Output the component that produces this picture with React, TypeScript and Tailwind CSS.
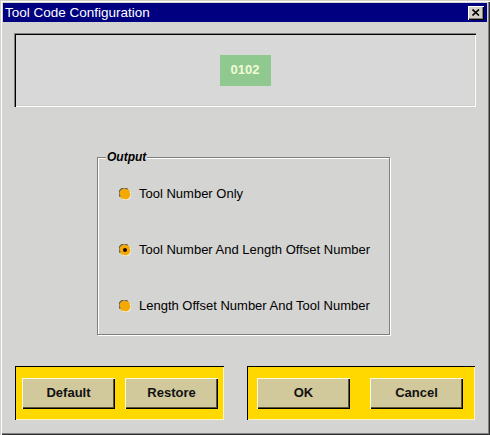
import React, { useState } from "react";

const OPTIONS = [
  "Tool Number Only",
  "Tool Number And Length Offset Number",
  "Length Offset Number And Tool Number",
];

const Radio = ({ checked }: { checked: boolean }) => (
  <svg width="12" height="12" viewBox="0 0 12 12" className="shrink-0">
    <circle cx="6" cy="6" r="5.5" fill="#f5a800" />
    <path d="M1.2 8.5 A5.2 5.2 0 0 1 8.5 1.2" fill="none" stroke="#6b5a3a" strokeWidth="1.3" />
    <path d="M3.5 10.8 A5.2 5.2 0 0 0 10.8 3.5" fill="none" stroke="#fff6d8" strokeWidth="1" />
    {checked && <circle cx="6" cy="6" r="2" fill="#1a0a00" />}
  </svg>
);

const Button = ({ label }: { label: string }) => (
  <button className="w-[93px] h-[31px] bg-[#d1c89c] text-[13px] font-bold text-[#111] shadow-[inset_1px_1px_#fffbe0,inset_-1px_-1px_#000,inset_-2px_-2px_#5a5438]">
    {label}
  </button>
);

export default function App() {
  const [selected, setSelected] = useState(1);

  return (
    <div
      className="w-[490px] h-[435px] bg-[#d4d4d2] p-[3px] flex flex-col shadow-[inset_1px_1px_#d4d0c8,inset_2px_2px_#ffffff,inset_-1px_-1px_#303030,inset_-2px_-2px_#808080]"
      style={{ fontFamily: '"Liberation Sans", Arial, sans-serif' }}
    >
      {/* title bar */}
      <div className="h-[19px] bg-[#000080] flex items-center justify-between pl-[2px] pr-[3px]">
        <span className="text-white text-[13.5px] leading-none">Tool Code Configuration</span>
        <div className="w-[16px] h-[14px] bg-[#d4d0c8] flex items-center justify-center shadow-[inset_1px_1px_#ffffff,inset_-1px_-1px_#000,inset_-2px_-2px_#808080]">
          <svg width="8" height="7" viewBox="0 0 8 7">
            <path d="M0.5 0.5 L7 6.5 M7 0.5 L0.5 6.5" stroke="#000" strokeWidth="1.6" />
          </svg>
        </div>
      </div>

      <div className="flex flex-col px-[11px]">
        {/* code display */}
        <div className="mt-[11px] h-[74px] bg-[#d8d8d8] flex items-center justify-center shadow-[inset_1px_1px_#808080,inset_2px_2px_#000,inset_-1px_-1px_#ffffff,inset_-2px_-2px_#d4d0c8]">
          <div className="w-[51px] h-[31px] bg-[#8fc98f] flex items-center justify-center text-[13px] font-bold text-[#f4fbd6]">
            0102
          </div>
        </div>

        {/* output group */}
        <div className="relative ml-[83px] mt-[50px] w-[293px] h-[178px] border border-[#808080] shadow-[1px_1px_#ffffff,inset_1px_1px_#ffffff] pt-[8px]">
          <span className="absolute -top-[8px] left-[8px] px-[1px] bg-[#d4d4d2] text-[12px] font-bold italic leading-[14px] text-black">
            Output
          </span>
          {OPTIONS.map((opt, i) => (
            <div
              key={opt}
              className="h-[56px] flex items-center gap-[8px] pl-[21px] cursor-default"
              onClick={() => setSelected(i)}
            >
              <Radio checked={selected === i} />
              <span className="text-[13px] text-black">{opt}</span>
            </div>
          ))}
        </div>

        {/* action panels */}
        <div className="mt-[31px] flex justify-between">
          <div className="ml-[1px] w-[209px] h-[54px] bg-[#ffd800] flex items-center pl-[7px] gap-[10px] shadow-[inset_1px_1px_#000,inset_-1px_-1px_#fff6c0]">
            <Button label="Default" />
            <Button label="Restore" />
          </div>
          <div className="mr-[1px] w-[228px] h-[54px] bg-[#ffd800] flex items-center pl-[10px] gap-[20px] shadow-[inset_1px_1px_#000,inset_-1px_-1px_#fff6c0]">
            <Button label="OK" />
            <Button label="Cancel" />
          </div>
        </div>
      </div>
    </div>
  );
}
